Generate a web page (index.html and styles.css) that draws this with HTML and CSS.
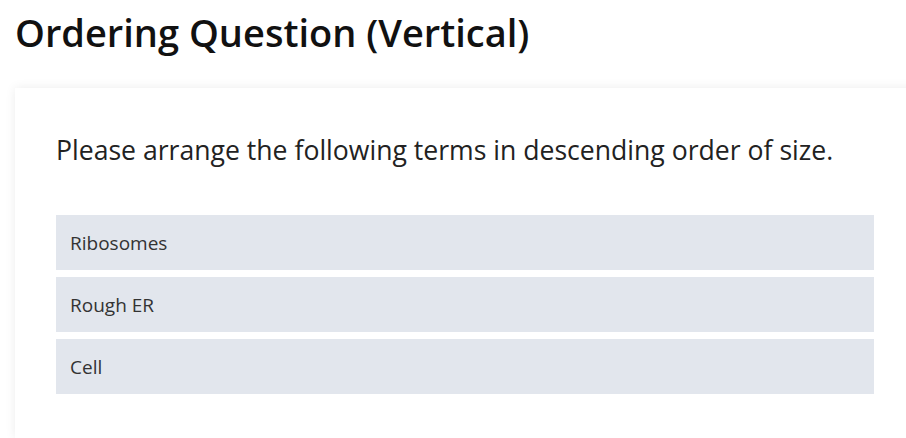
FILE: index.html
```html
<!DOCTYPE html>
<html lang="en">
<head>
<meta charset="utf-8">
<title>Ordering Question (Vertical)</title>
<link rel="stylesheet" href="styles.css">
</head>
<body>
<main class="page">
  <h1 class="title">Ordering Question (Vertical)</h1>
  <section class="card">
    <p class="prompt">Please arrange the following terms in descending order of size.</p>
    <ul class="order-list">
      <li class="order-item">Ribosomes</li>
      <li class="order-item">Rough ER</li>
      <li class="order-item">Cell</li>
    </ul>
  </section>
</main>
</body>
</html>
```
FILE: styles.css
```css
html, body {
  margin: 0;
  padding: 0;
  background: #ffffff;
  overflow: hidden;
}
body {
  font-family: "Open Sans", "Noto Sans", sans-serif;
  color: #222;
}
.page {
  padding: 6px 0 0 15px;
}
.title {
  margin: 0;
  font-size: 38px;
  font-weight: 600;
  line-height: 52px;
  color: #111;
}
.card {
  margin-top: 30px;
  width: 818px;
  padding: 35px 41px 44px;
  background: #fff;
  box-shadow: 0 0 10px rgba(0, 0, 0, 0.08);
}
.prompt {
  margin: 0 0 38px 0;
  font-size: 26.6px;
  line-height: 54px;
  color: #222;
}
.order-list {
  list-style: none;
  margin: 0;
  padding: 0;
  display: flex;
  flex-direction: column;
  gap: 7px;
}
.order-item {
  background: #e2e6ed;
  height: 55px;
  display: flex;
  align-items: center;
  padding-left: 14px;
  font-size: 19px;
  color: #333;
}
```
